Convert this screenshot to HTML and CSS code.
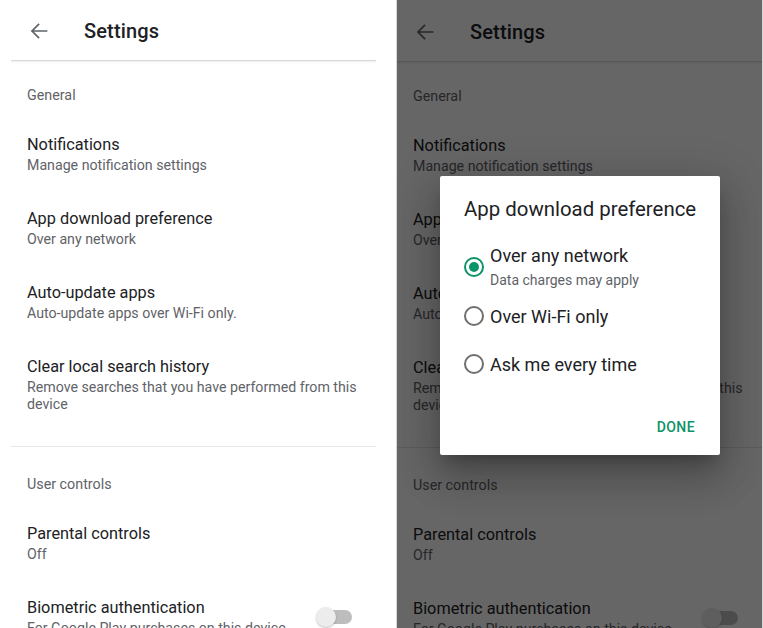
FILE: index.html
```html
<!DOCTYPE html>
<html lang="en">
<head>
<meta charset="utf-8">
<title>Settings</title>
<link rel="stylesheet" href="styles.css">
</head>
<body>
<div class="stage">
  <div class="screen">
    <header class="appbar">
      <svg class="back" viewBox="0 0 24 24" width="24" height="24"><path d="M19.5 12H5M11.5 5.5L5 12l6.5 6.5" fill="none" stroke="#5f6368" stroke-width="1.7" stroke-linecap="square"/></svg>
      <h1 class="appbar-title">Settings</h1>
    </header>
    <section class="section">
      <div class="section-label">General</div>
      <div class="row"><div class="row-text"><div class="row-title">Notifications</div><div class="row-sub">Manage notification settings</div></div></div>
      <div class="row"><div class="row-text"><div class="row-title">App download preference</div><div class="row-sub">Over any network</div></div></div>
      <div class="row"><div class="row-text"><div class="row-title">Auto-update apps</div><div class="row-sub">Auto-update apps over Wi-Fi only.</div></div></div>
      <div class="row"><div class="row-text"><div class="row-title">Clear local search history</div><div class="row-sub">Remove searches that you have performed from this device</div></div></div>
    </section>
    <div class="divider"></div>
    <section class="section second">
      <div class="section-label">User controls</div>
      <div class="row"><div class="row-text"><div class="row-title">Parental controls</div><div class="row-sub">Off</div></div></div>
      <div class="row"><div class="row-text"><div class="row-title">Biometric authentication</div><div class="row-sub">For Google Play purchases on this device</div></div><div class="switch"><span class="track"></span><span class="thumb"></span></div></div>
    </section>
  </div>

  <div class="screen dimmed">
    <header class="appbar">
      <svg class="back" viewBox="0 0 24 24" width="24" height="24"><path d="M19.5 12H5M11.5 5.5L5 12l6.5 6.5" fill="none" stroke="#5f6368" stroke-width="1.7" stroke-linecap="square"/></svg>
      <h1 class="appbar-title">Settings</h1>
    </header>
    <section class="section">
      <div class="section-label">General</div>
      <div class="row"><div class="row-text"><div class="row-title">Notifications</div><div class="row-sub">Manage notification settings</div></div></div>
      <div class="row"><div class="row-text"><div class="row-title">App download preference</div><div class="row-sub">Over any network</div></div></div>
      <div class="row"><div class="row-text"><div class="row-title">Auto-update apps</div><div class="row-sub">Auto-update apps over Wi-Fi only.</div></div></div>
      <div class="row"><div class="row-text"><div class="row-title">Clear local search history</div><div class="row-sub">Remove searches that you have performed from this device</div></div></div>
    </section>
    <div class="divider"></div>
    <section class="section second">
      <div class="section-label">User controls</div>
      <div class="row"><div class="row-text"><div class="row-title">Parental controls</div><div class="row-sub">Off</div></div></div>
      <div class="row"><div class="row-text"><div class="row-title">Biometric authentication</div><div class="row-sub">For Google Play purchases on this device</div></div><div class="switch"><span class="track"></span><span class="thumb"></span></div></div>
    </section>
    <div class="scrim"></div>
    <div class="dialog">
      <h2 class="dialog-title">App download preference</h2>
      <div class="options">
        <div class="option"><span class="radio checked"></span><div class="option-text"><div class="option-title">Over any network</div><div class="option-sub">Data charges may apply</div></div></div>
        <div class="option"><span class="radio"></span><div class="option-text"><div class="option-title">Over Wi-Fi only</div></div></div>
        <div class="option"><span class="radio"></span><div class="option-text"><div class="option-title">Ask me every time</div></div></div>
      </div>
      <div class="actions"><span class="btn">DONE</span></div>
    </div>
  </div>
</div>
</body>
</html>
```

FILE: styles.css
```css
html, body {
  margin: 0;
  padding: 0;
  background: #ffffff;
  overflow: hidden;
}
body {
  font-family: Roboto, "Noto Sans", "Liberation Sans", sans-serif;
  color: #202124;
}
.stage {
  display: flex;
  width: 763px;
  height: 628px;
}
.screen {
  position: relative;
  width: 365px;
  height: 628px;
  overflow: hidden;
  background: #fff;
  margin-left: 11px;
  flex: none;
  box-sizing: border-box;
}
.screen.dimmed {
  margin-left: 20px;
  width: 367px;
  padding-top: 1px;
  border-left: 1px solid #d6d6d6;
  border-right: 1px solid #d6d6d6;
}
.appbar {
  height: 59px;
  display: flex;
  align-items: center;
  padding-left: 16px;
  padding-top: 1px;
  box-sizing: content-box;
  border-bottom: 1px solid #d9d9d9;
  box-shadow: 0 1px 2px rgba(0,0,0,0.08);
}
.back {
  display: block;
  margin-right: 33px;
}
.appbar-title {
  margin: 0;
  font-size: 20px;
  font-weight: 500;
  color: #202124;
  letter-spacing: 0.15px;
}
.section {
  padding-top: 24px;
  padding-bottom: 16px;
}
.section.second {
  padding-top: 27px;
}
.section-label {
  font-size: 14.3px;
  line-height: 20px;
  color: #5f6368;
  padding-left: 16px;
  margin-bottom: 12px;
}
.row {
  display: flex;
  align-items: center;
  padding: 17px 16px 17px 16px;
}
.row-text {
  flex: 1;
  min-width: 0;
}
.row-title {
  font-size: 16.3px;
  line-height: 22px;
  color: #202124;
}
.row-sub {
  font-size: 14.2px;
  line-height: 17px;
  margin-top: 1px;
  color: #5f6368;
}
.divider {
  height: 1px;
  background: #e6e6e6;
}
.switch {
  position: relative;
  width: 36px;
  height: 20px;
  flex: none;
  margin-left: 16px;
  margin-right: 8px;
}
.track {
  position: absolute;
  left: 2px;
  top: 3px;
  width: 34px;
  height: 14px;
  border-radius: 7px;
  background: #bdbdbd;
}
.thumb {
  position: absolute;
  left: 0;
  top: 0;
  width: 20px;
  height: 20px;
  border-radius: 50%;
  background: #ececec;
  box-shadow: 0 1px 2px rgba(0,0,0,0.25);
}
.scrim {
  position: absolute;
  inset: 0;
  background: rgba(0,0,0,0.6);
}
.dialog {
  position: absolute;
  left: 43px;
  top: 176px;
  width: 280px;
  box-sizing: border-box;
  background: #fff;
  border-radius: 2px;
  padding: 21px 25px 18px 24px;
  box-shadow: 0 11px 15px -7px rgba(0,0,0,0.25), 0 24px 38px 3px rgba(0,0,0,0.16), 0 9px 46px 8px rgba(0,0,0,0.14);
}
.dialog-title {
  margin: 0;
  font-size: 20.4px;
  line-height: 24px;
  font-weight: 400;
  color: #202124;
  white-space: nowrap;
}
.options {
  margin-top: 21px;
}
.option {
  display: flex;
  align-items: center;
  min-height: 42px;
  padding: 3px 0;
}
.radio {
  flex: none;
  width: 20px;
  height: 20px;
  box-sizing: border-box;
  border: 2px solid #6f6f6f;
  border-radius: 50%;
  margin-right: 6px;
  margin-bottom: 2px;
  position: relative;
}
.radio.checked {
  border-color: #0b9467;
}
.radio.checked::after {
  content: "";
  position: absolute;
  left: 3px;
  top: 3px;
  width: 10px;
  height: 10px;
  border-radius: 50%;
  background: #0b9467;
}
.option-title {
  font-size: 18px;
  line-height: 22px;
  color: #202124;
}
.option-sub {
  font-size: 14px;
  line-height: 20px;
  margin-top: 3px;
  color: #5f6368;
}
.actions {
  display: flex;
  justify-content: flex-end;
  margin-top: 28px;
}
.btn {
  font-size: 14px;
  line-height: 20px;
  font-weight: 500;
  letter-spacing: 0.4px;
  color: #0b9467;
}
```
